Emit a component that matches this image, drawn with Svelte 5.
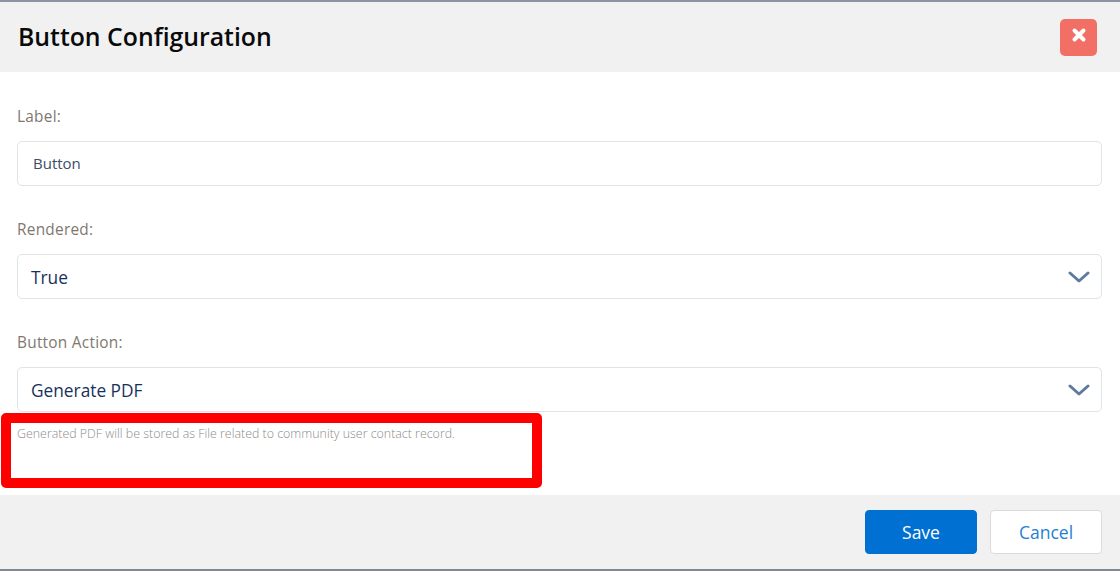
<script>
  const fields = [
    { label: 'Rendered:', value: 'True' },
    { label: 'Button Action:', value: 'Generate PDF' }
  ];
</script>

<div class="modal">
  <header class="head">
    <h1>Button Configuration</h1>
    <button class="close" aria-label="Close">
      <svg width="16" height="16" viewBox="0 0 16 16"><path d="M3.5 3.5l9 9M12.5 3.5l-9 9" stroke="#fff" stroke-width="4" stroke-linecap="round" fill="none"/></svg>
    </button>
  </header>
  <main class="body">
    <div class="field">
      <span class="lbl">Label:</span>
      <div class="box input">Button</div>
    </div>
    {#each fields as f}
      <div class="field">
        <span class="lbl">{f.label}</span>
        <div class="box select">
          <span>{f.value}</span>
          <svg width="22" height="12" viewBox="0 0 22 12"><path d="M2 2l9 8 9-8" stroke="#5f7a9e" stroke-width="3" stroke-linecap="round" stroke-linejoin="round" fill="none"/></svg>
        </div>
      </div>
    {/each}
    <p class="hint">Generated PDF will be stored as File related to community user contact record.</p>
    <div class="mark"></div>
  </main>
  <footer class="foot">
    <button class="btn save">Save</button>
    <button class="btn cancel">Cancel</button>
  </footer>
</div>

<style>
  :global(body) { margin: 0; background: #fff; }
  .modal {
    width: 1120px; height: 571px; box-sizing: border-box;
    display: flex; flex-direction: column;
    border-top: 2px solid #8a94a3; border-bottom: 2px solid #7f8894;
    font-family: "Open Sans", sans-serif; position: relative;
  }
  .head {
    height: 70px; background: #f1f1f1; flex: none;
    display: flex; align-items: center; justify-content: space-between;
    padding: 0 23px 0 18px;
  }
  h1 { margin: 0 0 2px; font-size: 24.8px; font-weight: 600; color: #0a0a0a; }
  .close {
    width: 37px; height: 37px; border: 0; border-radius: 5px; background: #f26f66;
    display: flex; align-items: center; justify-content: center; padding: 0 0 4px;
  }
  .body { flex: 1; position: relative; padding: 34px 18px 0 17px; background: #fff; }
  .field { margin-bottom: 33px; }
  .lbl { display: block; font-size: 15.4px; line-height: 21px; color: #80786f; margin-bottom: 14px; letter-spacing: 0.25px; }
  .box {
    height: 45px; box-sizing: border-box; border: 1px solid #dfe3ea; border-radius: 5px;
    background: #fff; display: flex; align-items: center;
  }
  .input { padding: 0 0 2px 15px; font-size: 15px; color: #3c4d66; }
  .select { padding: 1px 11px 0 13px; justify-content: space-between; font-size: 17.3px; color: #16325c; }
  .hint {
    margin: -19px 0 0; font-size: 12.4px; line-height: 16px; color: #8f8a88; font-weight: 300;
  }
  .mark {
    position: absolute; left: 1px; top: 341px; width: 541px; height: 75px;
    box-sizing: border-box; border: 10px solid #fe0000; border-radius: 5px;
  }
  .foot {
    height: 74px; flex: none; background: #f1f1f1;
    display: flex; align-items: center; justify-content: flex-end; gap: 13px;
    padding: 0 18px 0 0;
  }
  .btn {
    height: 44px; border-radius: 4px; font-family: inherit; font-size: 17.5px; padding: 0 0 1px;
  }
  .save { width: 112px; background: #0070d2; border: 1px solid #0070d2; color: #fff; }
  .cancel { width: 112px; background: #fff; border: 1px solid #dddbda; color: #1f7fd6; }
</style>
